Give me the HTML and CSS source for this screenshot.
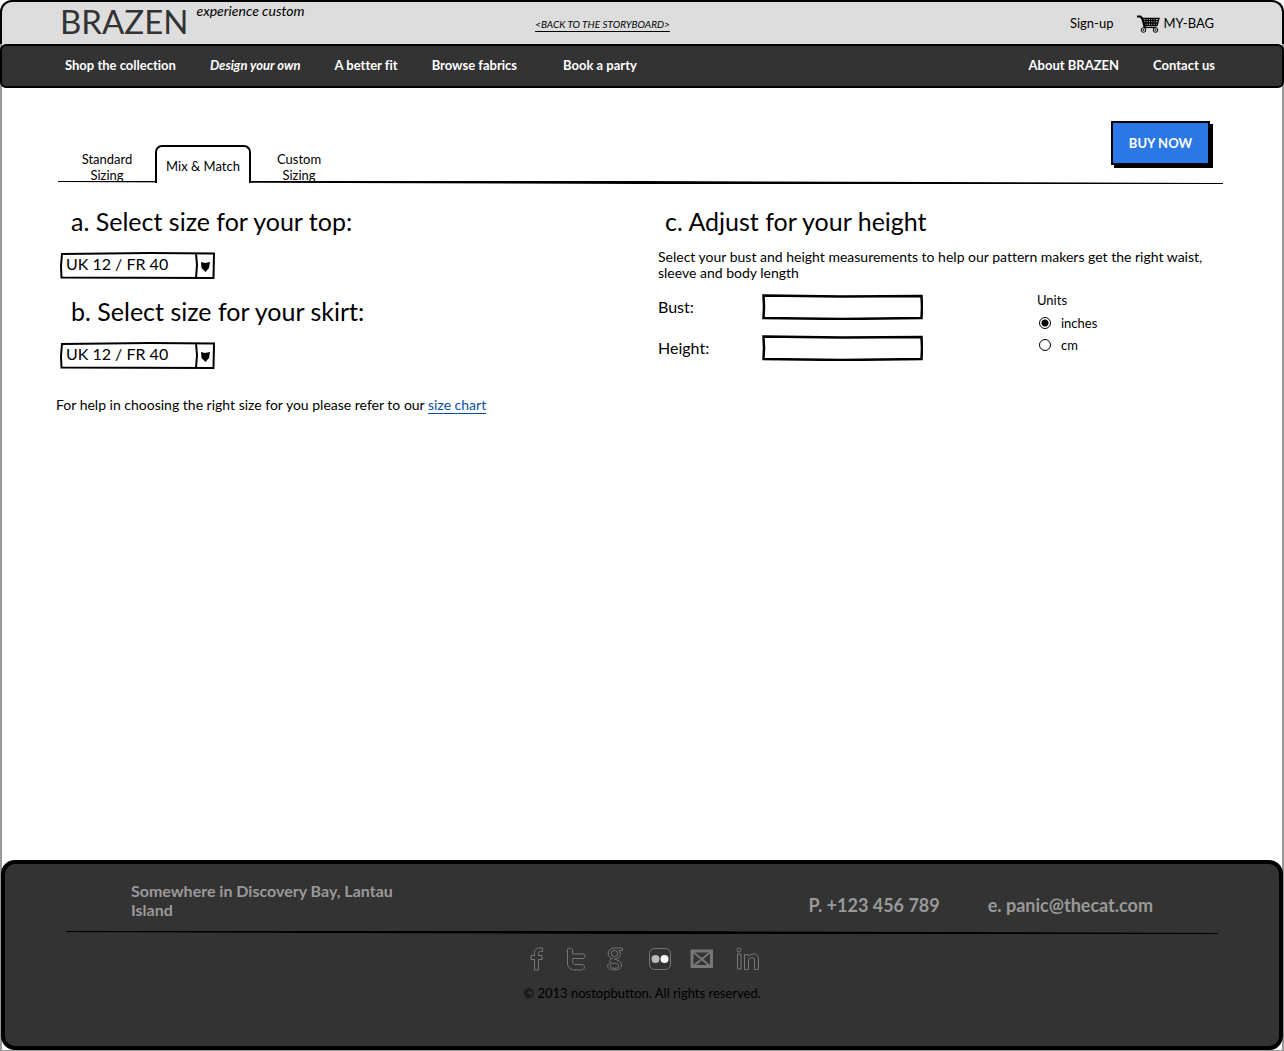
FILE: index.html
```html
<!DOCTYPE html>
<html lang="en">
<head>
<meta charset="utf-8">
<title>BRAZEN - Mix &amp; Match sizing</title>
<link rel="stylesheet" href="styles.css">
</head>
<body>
<div class="page">
  <header class="topbar">
    <div class="brand">
      <span class="logo">BRAZEN</span>
      <em class="tagline">experience custom</em>
    </div>
    <div class="topbar-rest">
      <a class="back" href="#">&lt;BACK TO THE STORYBOARD&gt;</a>
      <div class="account">
        <a href="#">Sign-up</a>
        <a class="bag" href="#">
          <svg width="23" height="18" viewBox="0 0 23 18" fill="none" stroke="#000" aria-hidden="true">
            <path d="M0 1.5H3.5L5.5 4L7.5 11.5V13" stroke-width="2.2"/>
            <path d="M5 3.5H22L20 10.5H7.5M6 5.7H21M6.8 8H20.5M9 4V10.5M11.3 4V10.5M13.6 4V10.5M15.9 4V10.5M18.2 4V10.5" stroke-width="1.3"/>
            <path d="M7 12.5H19" stroke-width="1.2"/>
            <circle cx="6.5" cy="15" r="2.3"/><circle cx="18.5" cy="15" r="2.3"/>
            <circle cx="6.5" cy="15" r=".5"/><circle cx="18.5" cy="15" r=".5"/>
          </svg>
          MY-BAG
        </a>
      </div>
    </div>
  </header>
  <nav class="nav">
    <a href="#">Shop the collection</a>
    <a class="current" href="#">Design your own</a>
    <a href="#">A better fit</a>
    <a href="#">Browse fabrics</a>
    <a class="party" href="#">Book a party</a>
    <a class="about" href="#">About BRAZEN</a>
    <a href="#">Contact us</a>
  </nav>

  <main class="main">
    <div class="tab-row">
      <div class="tabs" role="tablist">
        <button class="tab" role="tab" type="button">Standard Sizing</button>
        <button class="tab selected" role="tab" type="button" aria-selected="true">Mix &amp; Match</button>
        <button class="tab" role="tab" type="button">Custom Sizing</button>
      </div>
      <button class="buy" type="button">BUY NOW</button>
    </div>
    <hr class="rule">

    <form class="columns">
      <section>
        <h2><label for="top-size">a. Select size for your top:</label></h2>
        <select class="size" id="top-size"><option>UK 12 / FR 40</option></select>
        <h2><label for="skirt-size">b. Select size for your skirt:</label></h2>
        <select class="size" id="skirt-size"><option>UK 12 / FR 40</option></select>
        <p class="help">For help in choosing the right size for you please refer to our <a href="#">size chart</a></p>
      </section>
      <section>
        <h2>c. Adjust for your height</h2>
        <p class="intro">Select your bust and height measurements to help our pattern makers get the right waist, sleeve and body length</p>
        <div class="measure">
          <div class="fields">
            <label for="bust">Bust:</label><input type="text" id="bust">
            <label for="height">Height:</label><input type="text" id="height">
          </div>
          <fieldset class="units">
            <legend>Units</legend>
            <label><input type="radio" name="units" checked>inches</label>
            <label><input type="radio" name="units">cm</label>
          </fieldset>
        </div>
      </section>
    </form>
  </main>

  <footer class="footer">
    <div class="contact">
      <address>Somewhere in Discovery Bay, Lantau Island</address>
      <div class="reach"><span>P. +123 456 789</span><span>e. panic@thecat.com</span></div>
    </div>
    <hr class="rule">
    <div class="social">
      <a href="#" aria-label="Facebook"><svg width="20" height="24" viewBox="0 0 20 24"><path d="M4.5 23V12.500H1V8.500H4.500V5.500C4.500 2 7 .7 12.500 1V4.500C9.500 4.300 8.500 5 8.500 6.500V8.500H12V12.500H8.500V23Z"/></svg></a>
      <a href="#" aria-label="Twitter"><svg width="23" height="24" viewBox="0 0 23 24"><path d="M1.500 2C3 .5 6 1 6.500 2.500V7H17C20 7.500 19.500 11 17 11.500H7C6 15 7 17.500 9 17.500H16C19.500 18 19 22.500 16 23H8C3 22.500 1.500 19 1.500 16Z"/></svg></a>
      <a href="#" aria-label="Google"><svg width="24" height="24" viewBox="0 0 24 24"><path d="M17.500 1H9C1.500 1.500 1.500 10.500 7.500 11.500C3 13 4 14.500 6.500 15.500C.5 17 1.500 23 9.500 23C18 23 18.500 15.500 13 13.500L9.500 12C15.500 11.500 16.500 6.500 14 3.500H17.500Z"/><ellipse cx="9.500" cy="6.500" rx="3.200" ry="3.200"/><ellipse cx="9.500" cy="18.800" rx="4.200" ry="2.500"/></svg></a>
      <a href="#" aria-label="Flickr"><svg width="29" height="24" viewBox="0 0 29 24"><rect x="4.500" y="1.500" width="21" height="21" rx="5"/><circle cx="10.500" cy="12" r="4" fill="#bbb" stroke="none"/><circle cx="19.500" cy="12" r="4" fill="#fff" stroke="none"/></svg></a>
      <a href="#" aria-label="Email"><svg width="28" height="24" viewBox="0 0 28 24"><rect x="2" y="4" width="19.500" height="15.500" stroke-width="3"/><path d="M3 5L19.500 18.500M20.500 5L4 18.500" stroke-width="1.800"/></svg></a>
      <a href="#" aria-label="LinkedIn"><svg width="26" height="24" viewBox="0 0 26 24"><circle cx="5" cy="3" r="2"/><path d="M3.500 7H7V22H3.500ZM10.500 7.500H14L14.500 9C19 5 24.500 7.500 24.500 12V22.500H20.500V13C20.500 10 15.500 10 14.500 13V22.500H10.500Z"/></svg></a>
    </div>
    <p class="copyright">© 2013 nostopbutton. All rights reserved.</p>
  </footer>
</div>
</body>
</html>
```
FILE: styles.css
```css
* { box-sizing: border-box; }

body {
  margin: 0;
  font: 13px/16px Lato, sans-serif;
  font-variant-ligatures: none;
  color: #000;
  background: #fff;
}

a { color: inherit; text-decoration: none; }

h2, p { margin: 0; }

.page {
  display: flex;
  flex-direction: column;
  min-height: 100vh;
  border: solid #999;
  border-width: 0 2px 1px;
  border-radius: 12px 12px 0 0;
}

/* header */
.topbar {
  display: grid;
  grid-template-columns: 41fr 59fr;
  height: 44px;
  margin: 0 -2px;
  padding: 0 68px 0 58px;
  background: #ddd;
  border: 2px solid #000;
  border-bottom: 0;
  border-radius: 12px 12px 0 0;
}

.brand { display: flex; gap: 8px; }

.logo { font-size: 33px; line-height: 38px; color: #333; }

.tagline { font-size: 14px; line-height: 17px; }

.topbar-rest {
  display: flex;
  align-items: center;
  justify-content: space-between;
  padding: 2px 0 0 2px;
}

.back { font-size: 10px; font-style: italic; text-decoration: underline; text-underline-offset: 3px; }

.account { display: flex; gap: 24px; }

.bag { display: flex; gap: 3px; }

.nav {
  display: flex;
  align-items: center;
  gap: 34px;
  height: 44px;
  margin: 0 -2px;
  padding: 0 67px 2px 63px;
  color: #fff;
  font-weight: bold;
  background: #333;
  border: 2px solid #000;
  border-radius: 6px;
}

.current { font-style: italic; }

.party { margin-left: 12px; }

.about { margin-left: auto; }

/* main */
.main { flex: 1; padding: 33px 59px 40px 56px; }

.rule {
  height: 3px;
  margin: 0;
  border: 0;
  background: #000;
  clip-path: polygon(0 0, 50% 0, 100% 2px, 100% 3px, 50% 3px, 0 1px);
}

.tab-row { display: flex; justify-content: space-between; }

.tabs { display: flex; align-items: flex-end; padding-left: 1px; }

.tab {
  width: 96px;
  height: 32px;
  padding: 2px 16px 0;
  font: inherit;
  color: inherit;
  background: none;
  border: 0;
}

.tab.selected {
  z-index: 1;
  height: 38px;
  margin-bottom: -2px;
  padding: 1px 0 0;
  background: #fff;
  border: 2px solid #000;
  border-bottom: 0;
  border-radius: 7px 7px 0 0;
}

.buy {
  width: 99px;
  height: 44px;
  margin: 0 13px 16px 0;
  padding: 0;
  font: bold 13px/16px Lato, sans-serif;
  color: #fff;
  background: #2c77e6;
  border: 2px solid #000;
  box-shadow: 3px 3px 0 #000;
}

.columns {
  display: grid;
  grid-template-columns: 600fr 565fr;
  padding-top: 22px;
}

h2 { padding-left: 13px; font-size: 25px; line-height: 30px; font-weight: normal; }

section + section h2 { padding-left: 7px; }

.size {
  display: block;
  appearance: none;
  width: 155px;
  height: 27px;
  margin: 16px 0 17px 2px;
  padding: 0 24px 3px 6px;
  font: 16px/20px Lato, sans-serif;
  color: #000;
  border: 0;
  background: url("data:image/svg+xml,%3Csvg xmlns='http://www.w3.org/2000/svg' viewBox='0 0 155 27'%3E%3Cpath d='M2 2L90 1L154 1.500L153.500 26L1.500 25.500L1 14ZM136 1.500L137 13L136 26' fill='none' stroke='%23000' stroke-width='2'/%3E%3Cpath d='M141 10L145 11L150 10L149 16L145.500 20L141.500 16Z'/%3E%3C/svg%3E") 0 0 / 100% 100% no-repeat;
}

.help { padding-top: 11px; margin-left: -2px; font-size: 14px; }

.help a { color: #0b50a0; text-decoration: underline; text-underline-offset: 3px; }

.intro { padding-top: 13px; font-size: 14px; }

.measure { display: grid; grid-template-columns: 379fr 186fr; padding-top: 13px; }

.fields {
  display: grid;
  grid-template-columns: 104px 161px;
  gap: 15px 0;
  align-items: center;
  font-size: 16px;
}

.fields input {
  width: 100%;
  height: 26px;
  padding: 0 6px;
  font: 16px/20px Lato, sans-serif;
  border: 0;
  background: url("data:image/svg+xml,%3Csvg xmlns='http://www.w3.org/2000/svg' viewBox='0 0 161 26' preserveAspectRatio='none'%3E%3Cpath d='M1.500 1.500L80 2.500L159.500 2L160 13L159.500 24L80 25L1.500 24L2 13Z' fill='none' stroke='%23000' stroke-width='2.500'/%3E%3C/svg%3E") 0 0 / 100% 100% no-repeat;
}

.units {
  display: flex;
  flex-direction: column;
  gap: 6px;
  margin: -2px 0 0;
  padding: 0;
  border: 0;
}

.units legend { margin-bottom: 7px; padding: 0; }

.units label { display: flex; align-items: center; gap: 10px; }

.units input {
  appearance: none;
  width: 12px;
  height: 12px;
  margin: 0 0 0 2px;
  border: 1px solid #000;
  border-radius: 50%;
}

.units input:checked { background: radial-gradient(circle, #000 3px, transparent 4px); }

/* footer */
.footer {
  min-height: 190px;
  margin: 0 -1px;
  padding: 17px 61px 40px;
  color: #999;
  background: #333;
  border: 4px solid #000;
  border-radius: 14px;
}

.contact {
  display: flex;
  align-items: flex-end;
  justify-content: space-between;
  padding: 0 65px 12px;
}

address { width: 280px; font: bold 16px/19px Lato, sans-serif; }

.reach { display: flex; gap: 48px; font: bold 18px/28px Lato, sans-serif; }

.social { display: flex; justify-content: center; gap: 16px; padding: 13px 0 14px 6px; }

.social svg { display: block; fill: none; stroke: #777; }

.copyright { color: #000; text-align: center; }
```
